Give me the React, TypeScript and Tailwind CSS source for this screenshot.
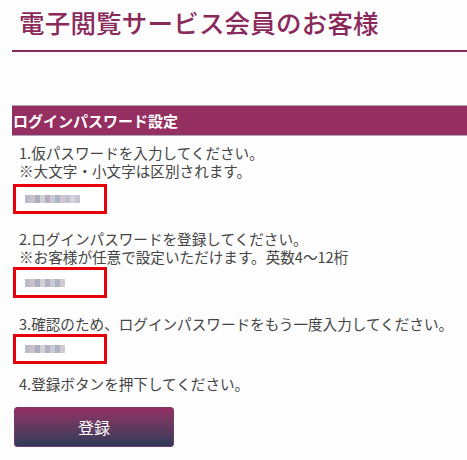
const FONT = { fontFamily: '"Noto Sans CJK JP", "Noto Sans", sans-serif' };

function Blurred({ w }: { w: number }) {
  const shades = ['#b9bdc9', '#c9c2cc', '#a9afbe', '#d2cfd6', '#b4b0c0', '#c6cbd6', '#aeb4c4', '#cfc9d1', '#bcc2cf', '#d6d3da', '#c3c7d2', '#b7b3c2'];
  return (
    <div className="flex h-[8px] blur-[0.6px]" style={{ width: w }}>
      {shades.slice(0, Math.round(w / 5)).map((c, i) => (
        <div key={i} className="h-full w-[5px]" style={{ background: c }} />
      ))}
    </div>
  );
}

function Field({ w, h = 30 }: { w: number; h?: number }) {
  return (
    <div className="w-[94px] border-[3px] border-[#e8000b] flex items-center pl-[9px] bg-white" style={{ height: h }}>
      <Blurred w={w} />
    </div>
  );
}

export default function App() {
  return (
    <div className="w-[467px] h-[460px] bg-[#fdfdfd] overflow-hidden" style={FONT}>
      <div className="pl-[19px] pt-[7px] h-[50px]">
        <h1 className="text-[25.5px] leading-[30px] font-medium text-[#8a2a5b] tracking-[0.2px]">電子閲覧サービス会員のお客様</h1>
      </div>
      <div className="ml-[12px] h-[2px] bg-[#8b2b5c]" />

      <div className="mt-[53px] ml-[12px] h-[31px] bg-[#952f61] border-t border-b border-[#aaa3b9] flex items-center pl-[1px]">
        <span className="text-white font-bold text-[15px] leading-none">ログインパスワード設定</span>
      </div>

      <div className="pl-[13px] text-[14.6px] leading-[18px] text-[#444444]">
        <p className="mt-[8px] pl-[6px]">1.仮パスワードを入力してください。</p>
        <p className="pl-[6px]">※大文字・小文字は区別されます。</p>
        <div className="mt-[4px]">
          <Field w={55} />
        </div>

        <p className="mt-[16px] pl-[6px]">2.ログインパスワードを登録してください。</p>
        <p className="pl-[6px]">※お客様が任意で設定いただけます。英数4～12桁</p>
        <div className="mt-[1px]">
          <Field w={40} h={31} />
        </div>

        <p className="mt-[17px] pl-[6px]">3.確認のため、ログインパスワードをもう一度入力してください。</p>
        <div className="mt-[1px]">
          <Field w={40} />
        </div>

        <p className="mt-[11px] pl-[6px]">4.登録ボタンを押下してください。</p>

        <button className="mt-[14px] ml-[1px] w-[160px] h-[40px] rounded-[3px] border border-[#7a3a66] bg-gradient-to-b from-[#932f63] to-[#2c3a5a] text-white text-[16px] leading-none">
          登録
        </button>
      </div>
    </div>
  );
}
